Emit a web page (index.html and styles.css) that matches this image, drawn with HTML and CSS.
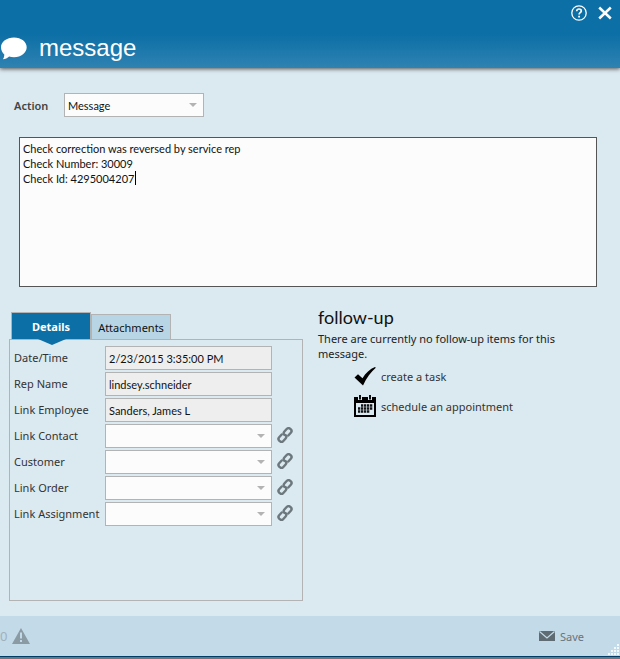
FILE: index.html
```html
<!DOCTYPE html>
<html lang="en">
<head>
    <meta charset="UTF-8">
    <meta name="viewport" content="width=device-width, initial-scale=1.0">
    <title>message</title>
    <link rel="stylesheet" href="styles.css">
</head>
<body>
    <!-- Shared icons -->
    <svg class="sprite" aria-hidden="true">
        <symbol id="icon-link" viewBox="0 0 16 16">
            <g transform="rotate(-48 8 8)" fill="none" stroke="#6c787d" stroke-width="2.4" stroke-linecap="round">
                <path d="M6.2 5.2H2.4a2.5 2.5 0 0 0-2.5 2.5v.6a2.5 2.5 0 0 0 2.5 2.5h3.4a2.5 2.5 0 0 0 2.5-2.3"/>
                <path d="M9.8 10.8h3.8a2.5 2.5 0 0 0 2.5-2.5v-.6a2.5 2.5 0 0 0-2.5-2.5h-3.4a2.5 2.5 0 0 0-2.5 2.3"/>
            </g>
        </symbol>
    </svg>

    <header class="header">
        <div class="window-btns">
            <button type="button" aria-label="Help">
                <svg width="16" height="16" viewBox="0 0 16 16" fill="none" stroke="#fff">
                    <circle cx="8" cy="8" r="7.2" stroke-width="1.3"/>
                    <path d="M5.7 6.3c0-1.5 1-2.3 2.3-2.3s2.3.8 2.3 2c0 1.6-2.2 1.7-2.2 3.4" stroke-width="1.7"/>
                    <path d="M8.1 10.7v1.7" stroke-width="1.8"/>
                </svg>
            </button>
            <button type="button" aria-label="Close">
                <svg width="14" height="14" viewBox="0 0 14 14" fill="none" stroke="#fff" stroke-width="2.5">
                    <path d="M1.2 1.5l11.6 11M12.8 1.5l-11.6 11"/>
                </svg>
            </button>
        </div>
        <div class="title">
            <svg width="27" height="23" viewBox="0 0 27 23" fill="#fff">
                <path d="M14 .5c7.2 0 12.7 4.3 12.7 9.8S21.2 20.2 14 20.2c-1.8 0-3.4-.2-4.9-.7C7.6 21 5.2 22.2 2.8 22.3c1-1.4 1.5-3 1.5-4.9C2.3 15.6 1 13.1 1 10.3 1 4.8 6.8.5 14 .5z"/>
            </svg>
            <h1>message</h1>
        </div>
    </header>

    <main>
        <div class="action">
            <label for="action">Action</label>
            <select id="action" class="field">
                <option>Message</option>
            </select>
        </div>

        <div class="note">
            <textarea aria-label="Message text" spellcheck="false">Check correction was reversed by service rep
Check Number: 30009
Check Id: 4295004207</textarea>
            <span class="caret"></span>
        </div>

        <div class="columns">
            <section class="info">
                <div class="tabs" role="tablist">
                    <button type="button" class="tab active" role="tab" aria-selected="true">Details</button>
                    <button type="button" class="tab" role="tab" aria-selected="false">Attachments</button>
                </div>
                <div class="panel" role="tabpanel">
                    <div class="row">
                        <label for="date">Date/Time</label>
                        <input id="date" class="field" type="text" value="2/23/2015 3:35:00 PM" readonly>
                    </div>
                    <div class="row">
                        <label for="rep">Rep Name</label>
                        <input id="rep" class="field" type="text" value="lindsey.schneider" readonly>
                    </div>
                    <div class="row">
                        <label for="employee">Link Employee</label>
                        <input id="employee" class="field" type="text" value="Sanders, James L" readonly>
                    </div>
                    <div class="row">
                        <label for="contact">Link Contact</label>
                        <select id="contact" class="field"><option></option></select>
                        <button type="button" class="link" aria-label="Open contact"><svg width="16" height="16"><use href="#icon-link"/></svg></button>
                    </div>
                    <div class="row">
                        <label for="customer">Customer</label>
                        <select id="customer" class="field"><option></option></select>
                        <button type="button" class="link" aria-label="Open customer"><svg width="16" height="16"><use href="#icon-link"/></svg></button>
                    </div>
                    <div class="row">
                        <label for="order">Link Order</label>
                        <select id="order" class="field"><option></option></select>
                        <button type="button" class="link" aria-label="Open order"><svg width="16" height="16"><use href="#icon-link"/></svg></button>
                    </div>
                    <div class="row">
                        <label for="assignment">Link Assignment</label>
                        <select id="assignment" class="field"><option></option></select>
                        <button type="button" class="link" aria-label="Open assignment"><svg width="16" height="16"><use href="#icon-link"/></svg></button>
                    </div>
                </div>
            </section>

            <section class="follow-up">
                <h2>follow-up</h2>
                <p>There are currently no follow-up items for this message.</p>
                <div class="follow-btns">
                    <button type="button">
                        <svg width="22" height="22" viewBox="0 0 22 22">
                            <path d="M.5 12.5l3.5-3.3 4.5 4C11.5 8 16 4 21 2l.8.8C17 7 12.5 13 9 20.5z"/>
                        </svg>
                        create a task
                    </button>
                    <button type="button">
                        <svg width="22" height="22" viewBox="0 0 22 22">
                            <path d="M0 2h22v20H0z"/>
                            <path d="M2 8h18v12H2z" fill="#dbe9f0"/>
                            <path d="M6 0v5M16 0v5" stroke="#dbe9f0" stroke-width="4"/>
                            <path d="M6 0v4.5M16 0v4.5" stroke="#111" stroke-width="2"/>
                            <path d="M7 10.5h12M4 13.5h15M4 16.5h12" stroke="#111" stroke-width="2.3" stroke-dasharray="2.3 .7"/>
                        </svg>
                        schedule an appointment
                    </button>
                </div>
            </section>
        </div>
    </main>

    <footer class="footer">
        <div class="alerts">
            <span>0</span>
            <svg width="18" height="16" viewBox="0 0 18 16">
                <path d="M9 0l9 16H0z" fill="#8b9ba4"/>
                <path d="M9 4.5v6M9 12v2" stroke="#c3dae8" stroke-width="2"/>
            </svg>
        </div>
        <button type="button" class="save">
            <svg width="16" height="10" viewBox="0 0 16 10">
                <path d="M0 0h16v10H0z" fill="#5f6c73"/>
                <path d="M.5 .5L8 7l7.5-6.5" fill="none" stroke="#c3dae8" stroke-width="1.2"/>
            </svg>
            Save
        </button>
        <svg class="grip" width="12" height="12" viewBox="0 0 12 12" fill="#fff">
            <path d="M9 0h2v2H9zM6 3h2v2H6zM9 3h2v2H9zM3 6h2v2H3zM6 6h2v2H6zM9 6h2v2H9zM0 9h2v2H0zM3 9h2v2H3zM6 9h2v2H6zM9 9h2v2H9z" opacity=".8"/>
        </svg>
    </footer>
</body>
</html>
```
FILE: styles.css
```css
/* General */
* {
    box-sizing: border-box;
}
body {
    font-family: "Noto Sans", "Open Sans", sans-serif;
    font-size: 11px;
    line-height: 15px;
    color: #333;
    background-color: #dbe9f0;
    margin: 0;
    min-height: 100vh;
    display: flex;
    flex-direction: column;
}
button, input, select, textarea {
    font: inherit;
    color: inherit;
    margin: 0;
}
input, select, textarea {
    font-family: Lato, sans-serif;
    color: #111;
}
button {
    background: none;
    border: none;
    padding: 0;
    cursor: pointer;
}
svg {
    display: block;
    flex: none;
}
.sprite {
    position: absolute;
    width: 0;
    height: 0;
}

/* Header */
.header {
    background: linear-gradient(#0c6fa5, #0c6fa5 50%, #2f82b2);
    box-shadow: 0 1px 4px #555;
    color: white;
    padding-top: 5px;
    height: 68px;
}
.window-btns {
    display: flex;
    align-items: center;
    justify-content: flex-end;
    gap: 11px;
    padding-right: 8px;
}
.title {
    display: flex;
    align-items: center;
    gap: 12px;
    padding-top: 12px;
}
h1 {
    font-family: "Liberation Sans", Arial, sans-serif;
    font-size: 24px;
    line-height: 30px;
    font-weight: normal;
    margin: 0;
}

/* Form fields */
.field {
    height: 24px;
    border: 1px solid #b3b3b3;
    border-radius: 0;
    padding: 0 3px;
    background-color: #fcfcfc;
}
input.field {
    background-color: #eee;
}
select.field {
    appearance: none;
    background-image: url("data:image/svg+xml,%3Csvg xmlns='http://www.w3.org/2000/svg' width='8' height='4'%3E%3Cpath d='M0 0h8L4 4z' fill='%23b3b3b3'/%3E%3C/svg%3E");
    background-repeat: no-repeat;
    background-position: right 6px center;
}

/* Main area */
main {
    flex: 1;
    padding: 25px 23px 15px 9px;
    display: flex;
    flex-direction: column;
}
.action {
    display: flex;
    align-items: center;
    padding-left: 5px;
}
.action label {
    width: 50px;
    font-weight: 600;
    color: #444;
}
.action select {
    width: 140px;
}
.note {
    position: relative;
    margin: 20px 0 25px 10px;
}
textarea {
    display: block;
    width: 100%;
    height: 150px;
    padding: 3px;
    border: 1px solid #555;
    background-color: #fcfcfc;
    resize: none;
    outline: none;
}
.caret {
    position: absolute;
    left: 116px;
    top: 34px;
    width: 1px;
    height: 14px;
    background-color: #000;
}
.columns {
    flex: 1;
    display: flex;
    gap: 15px;
}

/* Tabs */
.info {
    width: 294px;
    display: flex;
    flex-direction: column;
}
.tabs {
    display: flex;
    align-items: flex-end;
    padding-left: 2px;
}
.tab {
    width: 80px;
    height: 25px;
    color: #111;
    background-color: #b7d5e5;
    border: 1px solid #b3b3b3;
    border-bottom: none;
}
.tab.active {
    position: relative;
    height: 27px;
    font-weight: bold;
    color: white;
    background-color: #0c6fa5;
}
.tab.active::after {
    content: "";
    position: absolute;
    left: 26px;
    top: 100%;
    border: solid transparent;
    border-width: 6px 14px 0;
    border-top-color: #0c6fa5;
}
.panel {
    flex: 1;
    border: 1px solid #b3b3b3;
    padding: 6px 4px;
    display: flex;
    flex-direction: column;
    gap: 2px;
}
.row {
    display: grid;
    grid-template-columns: 91px 167px 16px;
    align-items: center;
}
.row label {
    padding-bottom: 2px;
}
.row .link {
    margin: 0 0 2px 5px;
}

/* Follow-up */
.follow-up {
    flex: 1;
    padding-right: 20px;
}
h2 {
    font-family: Lato, sans-serif;
    font-size: 18px;
    line-height: 20px;
    font-weight: normal;
    color: #111;
    margin: -5px 0 4px;
}
p {
    color: #222;
    margin: 0;
}
.follow-btns {
    display: flex;
    flex-direction: column;
    align-items: flex-start;
    gap: 8px;
    padding: 4px 0 0 36px;
}
.follow-btns button {
    display: flex;
    align-items: center;
    gap: 5px;
}

/* Footer */
.footer {
    position: relative;
    height: 43px;
    background-color: #c3dae8;
    border-bottom: 2px solid #6b7780;
    box-shadow: inset 0 -1px #003c66;
    display: flex;
    align-items: center;
    justify-content: space-between;
    padding: 0 36px 1px 0;
    color: #66757d;
}
.alerts, .save {
    display: flex;
    align-items: center;
    gap: 5px;
}
.alerts span {
    font-size: 13px;
    color: #9fb2bd;
}
.grip {
    position: absolute;
    right: 0;
    bottom: 1px;
}
```
